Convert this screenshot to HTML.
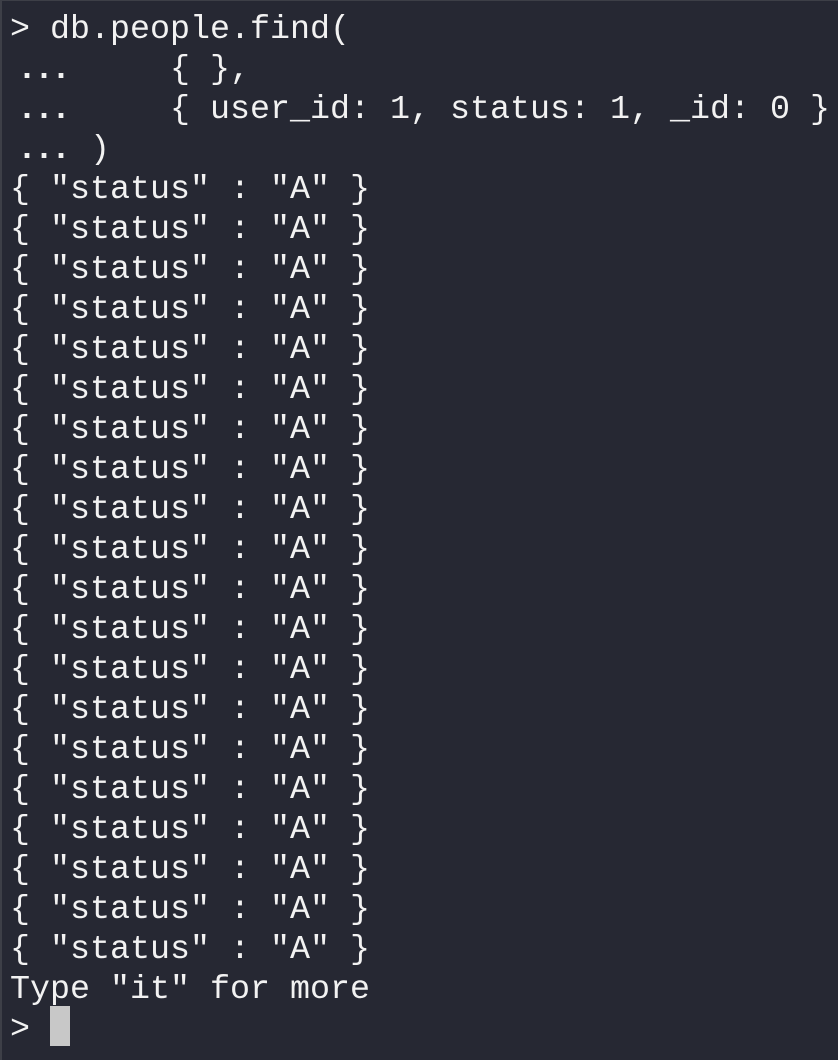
<!DOCTYPE html>
<html><head><style>
html,body{margin:0;padding:0}
body{width:838px;height:1060px;background:#262833;position:relative;overflow:hidden;border-left:2px solid #3d3f47;box-sizing:border-box;border-top:1px solid #3d3f47}
pre{position:absolute;left:8px;top:9px;margin:0;font-family:"Liberation Mono",monospace;font-size:33.33px;line-height:40px;color:#f2f2f2;white-space:pre}
.d{display:inline-block;width:40px;padding-left:7px;box-sizing:border-box;letter-spacing:-3px;overflow:visible;vertical-align:top;font-weight:bold;white-space:nowrap}
.c{display:inline-block;width:20px;height:40px;background:#c8c8c8;vertical-align:top;position:relative;top:-4px}
</style></head><body>
<pre>&gt; db.people.find(
<span class="d">...</span>      { },
<span class="d">...</span>      { user_id: 1, status: 1, _id: 0 }
<span class="d">...</span>  )
{ "status" : "A" }
{ "status" : "A" }
{ "status" : "A" }
{ "status" : "A" }
{ "status" : "A" }
{ "status" : "A" }
{ "status" : "A" }
{ "status" : "A" }
{ "status" : "A" }
{ "status" : "A" }
{ "status" : "A" }
{ "status" : "A" }
{ "status" : "A" }
{ "status" : "A" }
{ "status" : "A" }
{ "status" : "A" }
{ "status" : "A" }
{ "status" : "A" }
{ "status" : "A" }
{ "status" : "A" }
Type "it" for more
&gt; <span class="c"></span></pre>
</body></html>
